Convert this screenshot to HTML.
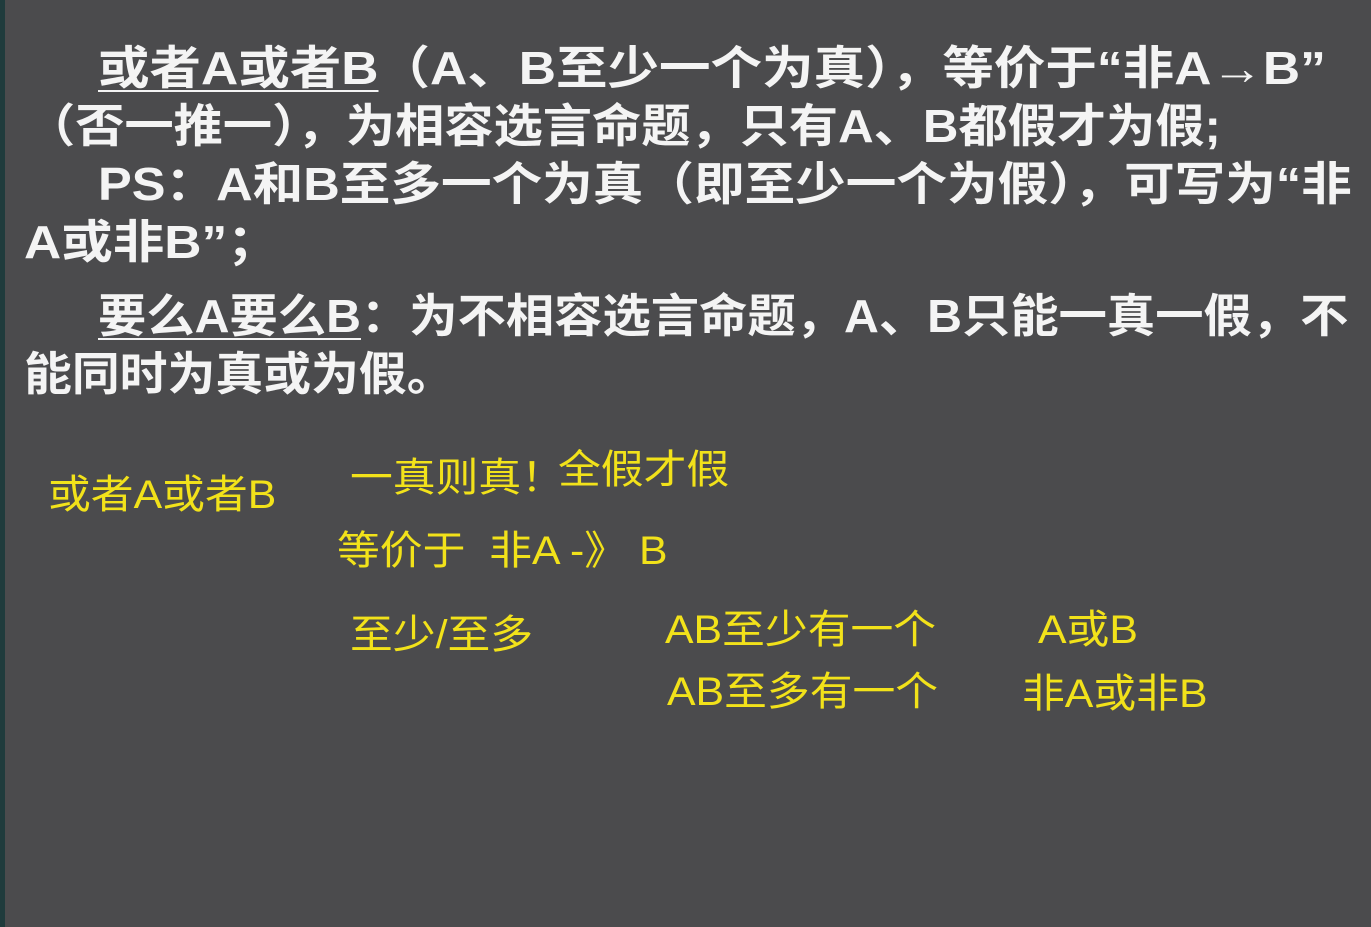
<!DOCTYPE html>
<html><head><meta charset="utf-8"><style>
html,body{margin:0;padding:0}
body{width:1371px;height:927px;background:#4b4b4d;position:relative;overflow:hidden;font-family:"Liberation Sans","Noto Sans CJK SC",sans-serif}
.edge{position:absolute;left:0;top:0;width:5px;height:927px;background:#1f3b3c}
.w{position:absolute;color:#f4f4f4;font-weight:bold;font-size:46px;line-height:58px;white-space:nowrap;transform-origin:0 50%}
.y{position:absolute;color:#f2e21a;font-size:40px;line-height:48px;white-space:nowrap;transform-origin:0 50%;transform:scaleX(1.07)}
u{text-decoration:underline;text-decoration-thickness:2px;text-underline-offset:6px}
</style></head><body>
<div class="edge"></div>
<div class="w" style="left:98px;top:39px;transform:scaleX(1.12)"><u>或者A或者B</u>（A、B至少一个为真），等价于“非A→B”</div>
<div class="w" style="left:26px;top:97px;transform:scaleX(1.07)">（否一推一），为相容选言命题，只有A、B都假才为假;</div>
<div class="w" style="left:98px;top:155px;transform:scaleX(1.1)">PS：A和B至多一个为真（即至少一个为假），可写为“非</div>
<div class="w" style="left:24px;top:213px;transform:scaleX(1.12)">A或非B”；</div>
<div class="w" style="left:98px;top:287px;transform:scaleX(1.05)"><u>要么A要么B</u>：为不相容选言命题，A、B只能一真一假，不</div>
<div class="w" style="left:24px;top:345px;transform:scaleX(1.04)">能同时为真或为假。</div>
<div class="y" style="left:48px;top:471px">或者A或者B</div>
<div class="y" style="left:350px;top:454px">一真则真！</div>
<div class="y" style="left:558px;top:446px">全假才假</div>
<div class="y" style="left:337px;top:527px">等价于&nbsp; 非A -》 B</div>
<div class="y" style="left:350px;top:611px">至少/至多</div>
<div class="y" style="left:665px;top:606px">AB至少有一个</div>
<div class="y" style="left:667px;top:668px">AB至多有一个</div>
<div class="y" style="left:1038px;top:606px">A或B</div>
<div class="y" style="left:1022px;top:670px">非A或非B</div>
</body></html>
